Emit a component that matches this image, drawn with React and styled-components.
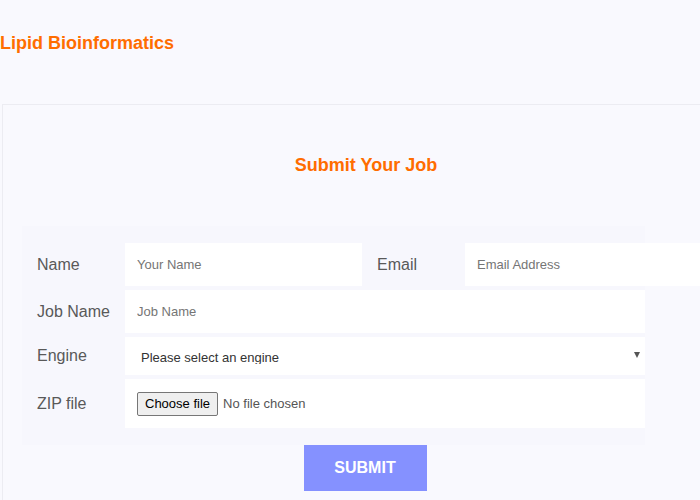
import styled, { createGlobalStyle } from 'styled-components';

const GlobalStyle = createGlobalStyle`
  html, body {
    margin: 0;
    padding: 0;
    background-color: #f9f9fe;
    overflow: hidden;
    font-family: "Liberation Sans", Arial, sans-serif;
  }
`;

const Page = styled.div`
  width: 700px;
  height: 500px;
`;

const Header = styled.header`
  height: 104px;
  display: flex;
  align-items: center;
  padding-bottom: 18px;
  box-sizing: border-box;
`;

const Brand = styled.h1`
  margin: 0;
  font-size: 18px;
  font-weight: bold;
  color: #ff6d00;
`;

const Card = styled.section`
  margin-left: 2px;
  width: 727px;
  border-top: 1px solid #ececf2;
  border-left: 1px solid #ececf2;
  background-color: #f9f9fe;
  padding: 50px 0 20px 19px;
  box-sizing: border-box;
`;

const CardTitle = styled.h2`
  margin: 0 0 50px -19px;
  text-align: center;
  font-size: 18px;
  font-weight: bold;
  color: #ff6d00;
`;

const FormBox = styled.form`
  width: 623px;
  background-color: #f7f7fd;
  padding: 17px 0;
  display: flex;
  flex-direction: column;
  gap: 4px;
`;

const Row = styled.div`
  display: flex;
  align-items: stretch;
`;

const Label = styled.label`
  display: flex;
  align-items: center;
  width: ${(p) => p.$width || 103}px;
  padding-left: 15px;
  box-sizing: border-box;
  flex-shrink: 0;
  font-size: 16px;
  color: #595959;
`;

const TextInput = styled.input`
  width: ${(p) => p.$width || 520}px;
  flex-shrink: 0;
  box-sizing: border-box;
  border: none;
  outline: none;
  background: #fff;
  padding: 14px 12px;
  line-height: 15px;
  font-family: inherit;
  font-size: 13px;
  color: #333;

  &::placeholder {
    color: #757575;
  }
`;

const SelectWrap = styled.div`
  position: relative;
  width: 520px;
  height: 38px;
  background: #fff;
  overflow: hidden;

  &::after {
    content: '';
    position: absolute;
    right: 5px;
    top: 15px;
    border-left: 3.5px solid transparent;
    border-right: 3.5px solid transparent;
    border-top: 6px solid #555;
    pointer-events: none;
  }
`;

const Select = styled.select`
  appearance: none;
  width: 100%;
  height: 38px;
  box-sizing: border-box;
  border: none;
  border-radius: 0;
  outline: none;
  background: transparent;
  padding: 13px 20px 11px 16px;
  font-family: inherit;
  font-size: 13px;
  color: #333;
`;

const FileField = styled.div`
  width: 520px;
  height: 49px;
  background: #fff;
  display: flex;
  align-items: center;
  gap: 5px;
  padding-left: 12px;
  box-sizing: border-box;
`;

const HiddenFile = styled.input`
  display: none;
`;

const FileButton = styled.label`
  display: inline-flex;
  align-items: center;
  height: 24px;
  padding: 0 7px;
  box-sizing: border-box;
  border: 1px solid #767676;
  border-radius: 2px;
  background-color: #efefef;
  font-size: 13px;
  color: #000;
  cursor: pointer;
`;

const FileStatus = styled.span`
  font-size: 13px;
  color: #555;
`;

const Actions = styled.div`
  display: flex;
  justify-content: center;
  margin-left: -21px;
`;

const SubmitButton = styled.button`
  width: 123px;
  height: 46px;
  border: none;
  background-color: #8591ff;
  color: #fff;
  font-family: inherit;
  font-size: 16px;
  font-weight: bold;
  cursor: pointer;
`;

export default function App() {
  return (
    <Page>
      <GlobalStyle />
      <Header>
        <Brand>Lipid Bioinformatics</Brand>
      </Header>
      <Card>
        <CardTitle>Submit Your Job</CardTitle>
        <FormBox onSubmit={(e) => e.preventDefault()}>
          <Row>
            <Label>Name</Label>
            <TextInput $width={237} placeholder="Your Name" />
            <Label $width={103}>Email</Label>
            <TextInput $width={260} placeholder="Email Address" />
          </Row>
          <Row>
            <Label>Job Name</Label>
            <TextInput placeholder="Job Name" />
          </Row>
          <Row>
            <Label>Engine</Label>
            <SelectWrap>
              <Select defaultValue="">
                <option value="">Please select an engine</option>
              </Select>
            </SelectWrap>
          </Row>
          <Row>
            <Label>ZIP file</Label>
            <FileField>
              <HiddenFile id="zipfile" type="file" accept=".zip" />
              <FileButton htmlFor="zipfile">Choose file</FileButton>
              <FileStatus>No file chosen</FileStatus>
            </FileField>
          </Row>
        </FormBox>
        <Actions>
          <SubmitButton type="submit">SUBMIT</SubmitButton>
        </Actions>
      </Card>
    </Page>
  );
}
